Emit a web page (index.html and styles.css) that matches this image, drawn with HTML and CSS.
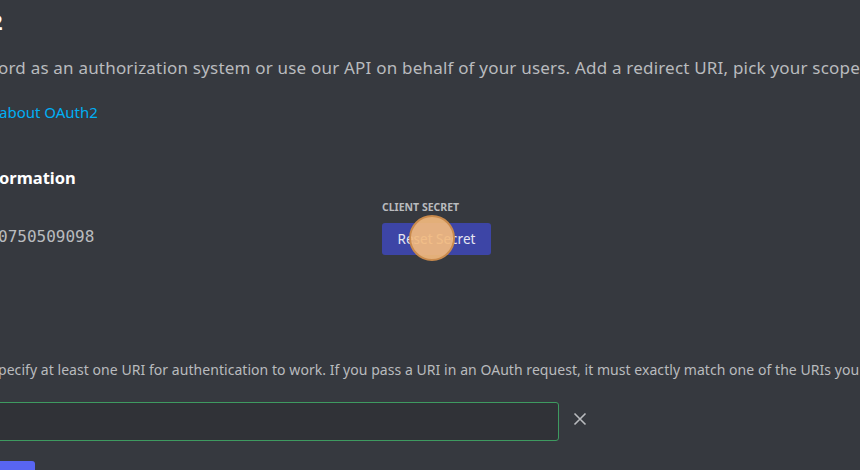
FILE: index.html
```html
<!DOCTYPE html>
<html>
<head>
<meta charset="utf-8">
<link rel="stylesheet" href="styles.css">
</head>
<body>
<main class="page">
  <h1 class="title">2</h1>
  <p class="lead">ord as an authorization system or use our API on behalf of your users. Add a redirect URI, pick your scope</p>
  <a class="link" href="#">about OAuth2</a>
  <h2 class="heading">ormation</h2>
  <section class="client">
    <div class="client-id">
      <span class="mono">0750509098</span>
    </div>
    <div class="client-secret">
      <div class="label">CLIENT SECRET</div>
      <div class="btn-wrap">
        <button class="btn-secret">Reset Secret</button>
        <span class="cursor"></span>
      </div>
    </div>
  </section>
  <p class="desc">pecify at least one URI for authentication to work. If you pass a URI in an OAuth request, it must exactly match one of the URIs you e</p>
  <div class="redirect-row">
    <div class="input"></div>
    <svg class="close" width="14" height="14" viewBox="0 0 14 14"><path d="M1.5 1.5 L12.5 12.5 M12.5 1.5 L1.5 12.5" stroke="#b9bbbe" stroke-width="1.6" fill="none"/></svg>
  </div>
  <button class="btn-add"></button>
</main>
</body>
</html>
```
FILE: styles.css
```css
html, body {
  margin: 0;
  padding: 0;
  background: #36393f;
  overflow: hidden;
  width: 860px;
  height: 470px;
}
.page {
  display: flex;
  flex-direction: column;
  align-items: flex-start;
  font-family: "Noto Sans", "Open Sans", sans-serif;
  color: #b9bbbe;
}
.title {
  margin: 9px 0 0 0;
  font-size: 22px;
  line-height: 24px;
  font-weight: 700;
  color: #fff;
  text-indent: -10px;
}
.lead {
  margin: 25px 0 0 -2px;
  font-size: 17px;
  line-height: 20px;
  letter-spacing: 0.2px;
  white-space: nowrap;
  color: #b9bbbe;
}
.link {
  margin-top: 24px;
  font-size: 15px;
  line-height: 20px;
  color: #00aff4;
  text-decoration: none;
  margin-left: -1px;
}
.heading {
  margin: 44px 0 0 -1px;
  font-size: 16.5px;
  line-height: 24px;
  font-weight: 700;
  color: #fff;
}
.client {
  display: grid;
  grid-template-columns: 382px auto;
  margin-top: 9px;
}
.client-id {
  display: flex;
  align-items: flex-end;
  height: 56px;
}
.mono {
  font-family: "DejaVu Sans Mono", monospace;
  font-size: 16px;
  line-height: 20px;
  color: #b9bbbe;
  margin-left: -2px;
  margin-bottom: 8px;
}
.label {
  font-size: 10.5px;
  line-height: 16px;
  font-weight: 700;
  color: #b9bbbe;
  height: 16px;
}
.btn-wrap {
  position: relative;
  margin-top: 8px;
}
.btn-secret {
  display: block;
  width: 109px;
  height: 32px;
  border: 0;
  border-radius: 3px;
  background: #3d45a6;
  color: #e6e7f2;
  font-family: "Noto Sans", sans-serif;
  font-size: 13.5px;
  padding: 0;
}
.cursor {
  position: absolute;
  left: 27px;
  top: -8px;
  width: 46px;
  height: 46px;
  border-radius: 50%;
  background: rgba(242, 186, 126, 0.92);
  border: 2px solid #c98a4c;
  box-sizing: border-box;
}
.desc {
  margin: 106px 0 0 -2px;
  font-size: 14px;
  line-height: 18px;
  letter-spacing: 0.05px;
  white-space: nowrap;
  color: #b9bbbe;
}
.redirect-row {
  display: flex;
  align-items: center;
  gap: 14px;
  margin-top: 23px;
}
.input {
  width: 560px;
  height: 37px;
  border: 1px solid #3e9a60;
  border-radius: 3px;
  background: #303237;
  margin-left: -3px;
}
.close {
  display: block;
  margin-top: -5px;
}
.btn-add {
  margin-top: 20px;
  margin-left: -10px;
  width: 45px;
  height: 20px;
  border: 0;
  border-radius: 3px;
  background: #5865f2;
}
```
